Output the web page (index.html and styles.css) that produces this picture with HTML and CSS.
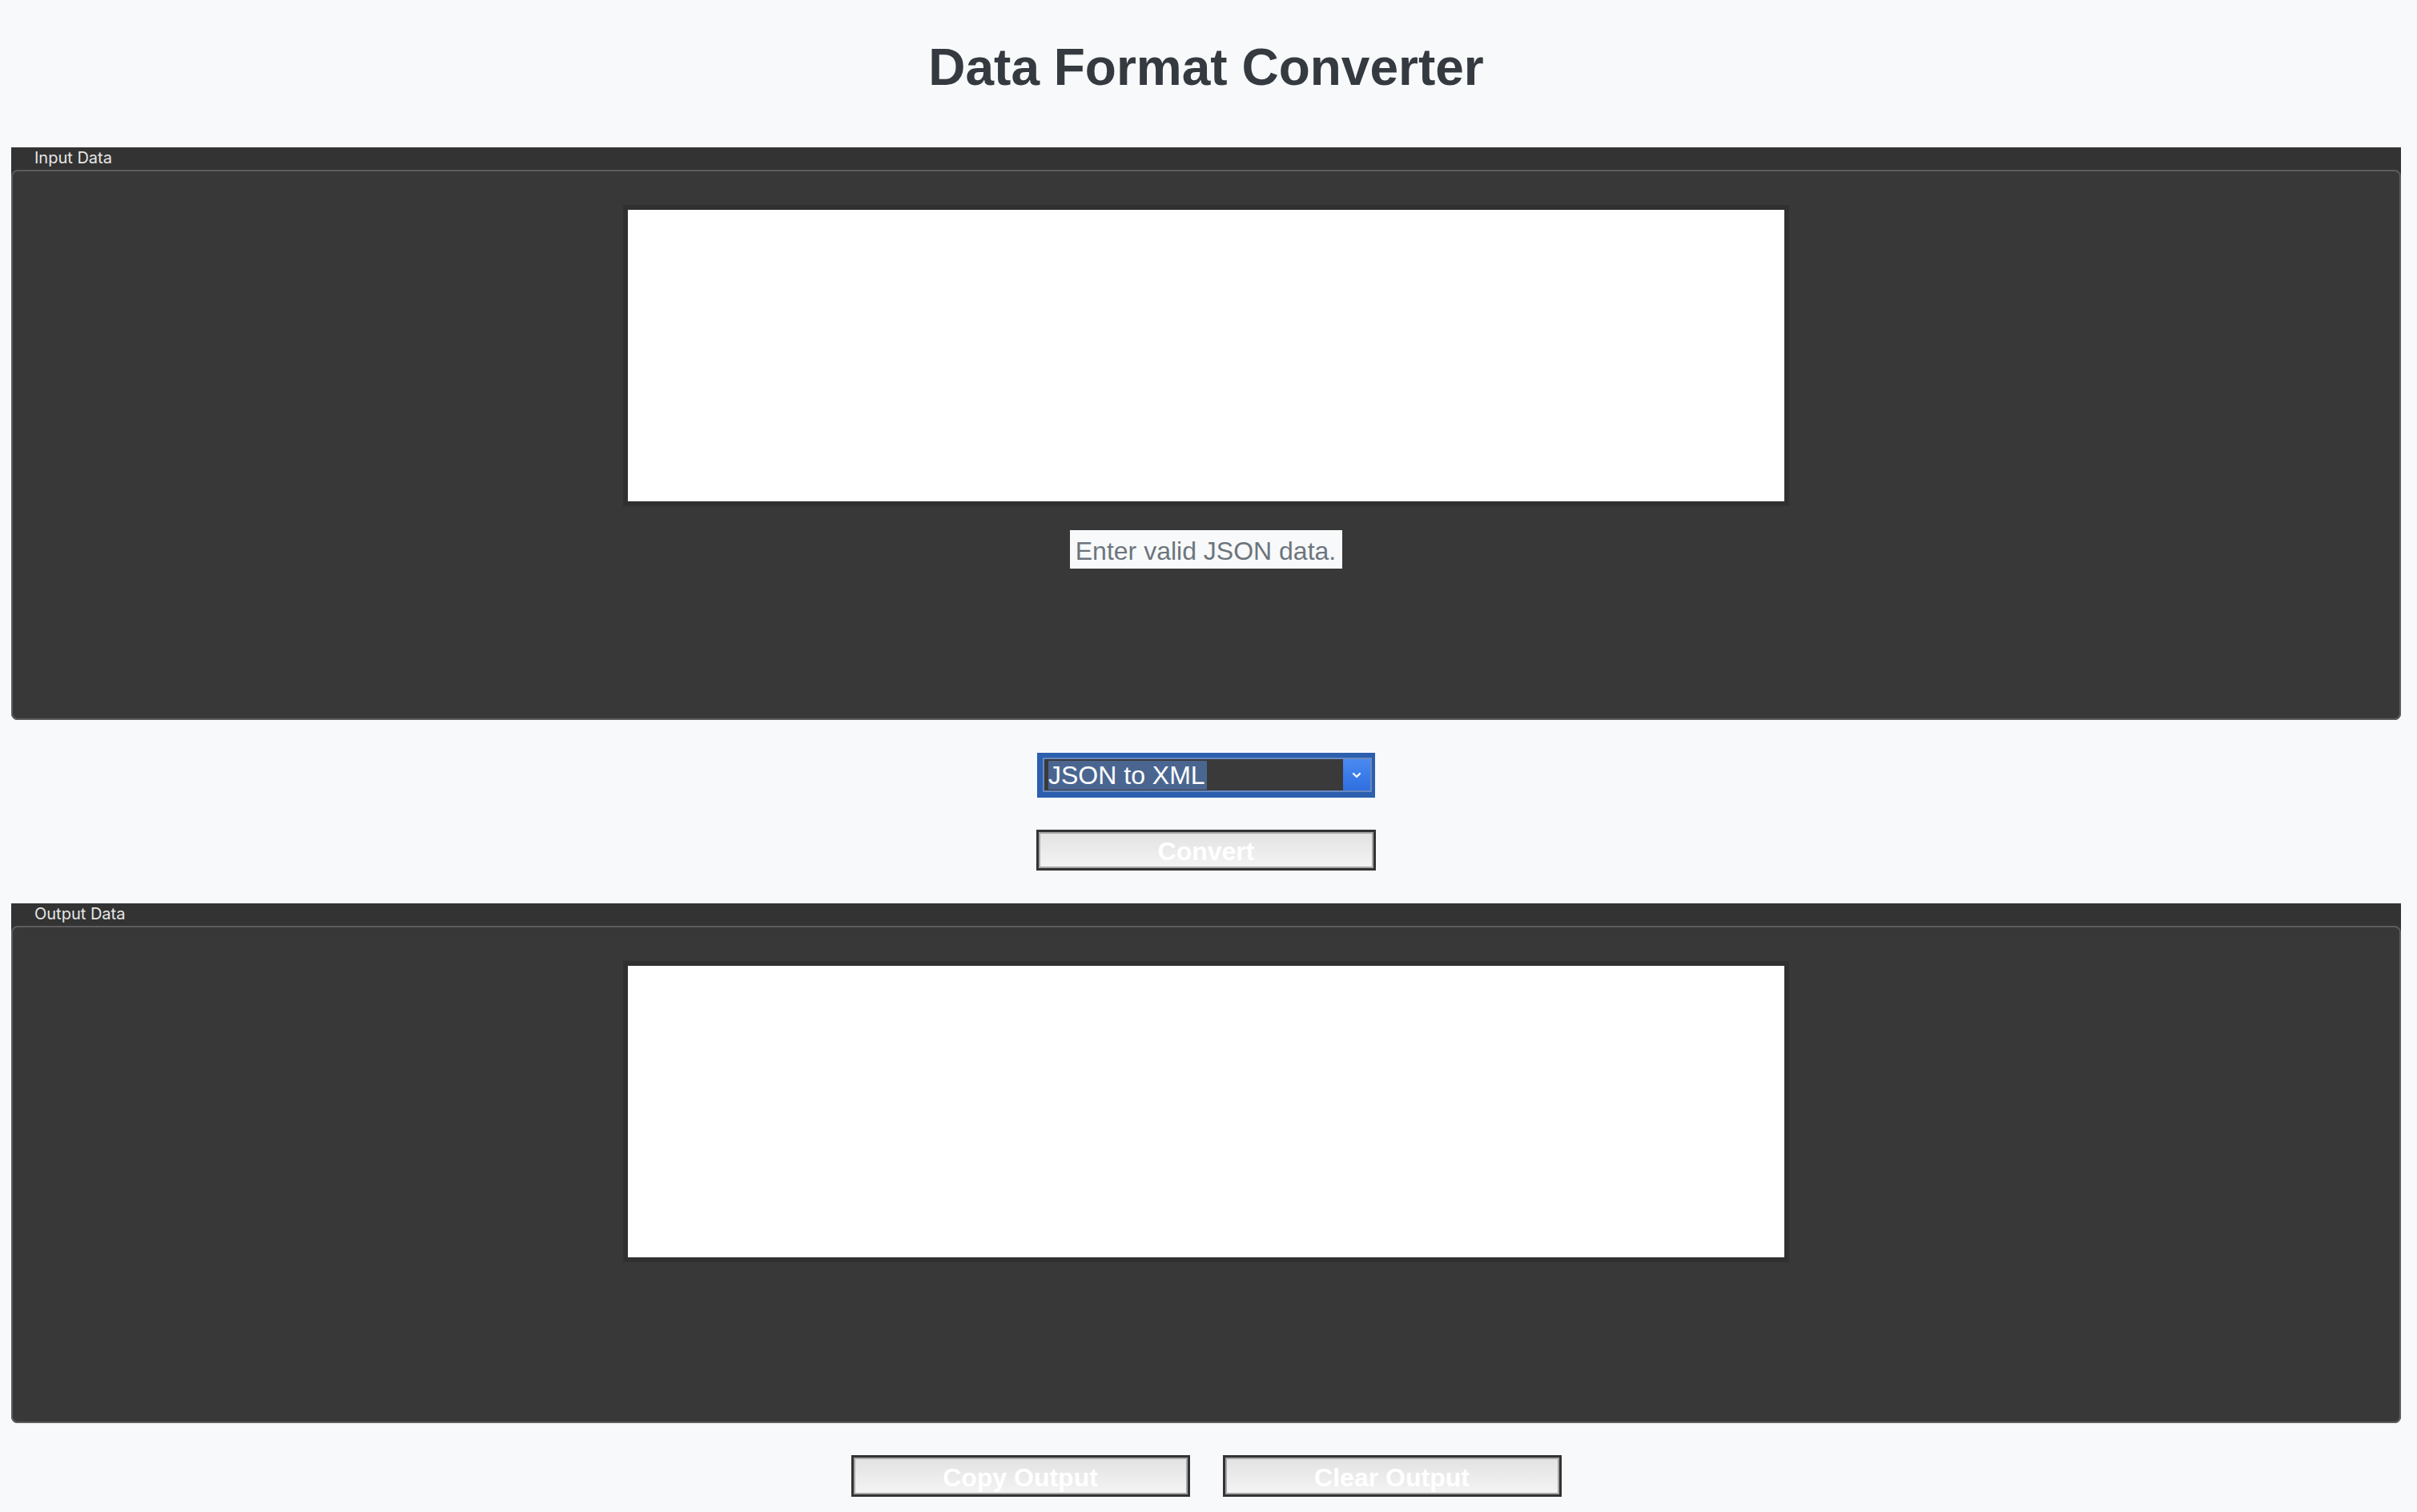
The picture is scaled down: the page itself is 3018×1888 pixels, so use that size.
FILE: index.html
```html
<!DOCTYPE html>
<html lang="en">
<head>
<meta charset="utf-8">
<title>Data Format Converter</title>
<link rel="stylesheet" href="styles.css">
</head>
<body>
<h1 class="title">Data Format Converter</h1>

<section class="panel">
  <div class="panel-label">Input Data</div>
  <div class="panel-box panel-box-input">
    <textarea class="data-area" aria-label="Input data"></textarea>
    <p class="hint">Enter valid JSON data.</p>
  </div>
</section>

<div class="controls">
  <div class="select" role="combobox" aria-label="Conversion type">
    <div class="select-inner">
      <div class="select-value"><span class="select-text">JSON to XML</span></div>
      <div class="select-arrow">
        <svg width="12" height="8" viewBox="0 0 12 8"><path d="M2 2 L6 6 L10 2" fill="none" stroke="#fff" stroke-width="2.2" stroke-linecap="round" stroke-linejoin="round"/></svg>
      </div>
    </div>
  </div>
  <button class="btn btn-convert">Convert</button>
</div>

<section class="panel">
  <div class="panel-label">Output Data</div>
  <div class="panel-box panel-box-output">
    <textarea class="data-area" aria-label="Output data" readonly></textarea>
  </div>
</section>

<div class="actions">
  <button class="btn btn-action">Copy Output</button>
  <button class="btn btn-action">Clear Output</button>
</div>
</body>
</html>
```

FILE: styles.css
```css
html, body {
  margin: 0;
  padding: 0;
}

body {
  background: #f8f9fa;
  font-family: "Liberation Sans", Arial, sans-serif;
  display: flex;
  flex-direction: column;
  padding-right: 6px;
}

.title {
  margin: 47px 0 63px;
  font-size: 64px;
  font-weight: bold;
  line-height: normal;
  color: #343a40;
  text-align: center;
}

.panel {
  margin: 0 14px;
  background: #333333;
  border-radius: 0 0 8px 8px;
}

.panel-label {
  height: 28px;
  padding-left: 29px;
  font-family: "Inter", "Noto Sans", sans-serif;
  font-size: 20px;
  line-height: 27px;
  color: #e6e6e6;
}

.panel-box {
  display: flex;
  flex-direction: column;
  align-items: center;
  background: #383838;
  border: 2px solid #5c5c5c;
  border-radius: 8px;
  padding-top: 42px;
}

.panel-box-input {
  padding-bottom: 187px;
}

.panel-box-output {
  padding-bottom: 199px;
}

.data-area {
  box-sizing: border-box;
  width: 1456px;
  height: 376px;
  margin: 0;
  border: 6px solid #303030;
  background: #ffffff;
  resize: none;
  outline: none;
  display: block;
}

.hint {
  margin: 30px 0 0;
  padding: 7px 8px 3px 7px;
  background: #f8f9fa;
  color: #6c757d;
  font-size: 32px;
  line-height: 38px;
}

.controls {
  display: flex;
  flex-direction: column;
  align-items: center;
  gap: 40px;
  margin: 41px 0;
}

.select {
  box-sizing: border-box;
  width: 422px;
  height: 56px;
  display: flex;
  background: #2c5fae;
  padding: 6px 4px 7px 7px;
}

.select-inner {
  flex: 1;
  display: flex;
  border: 2px solid #6888c0;
}

.select-value {
  flex: 1;
  display: flex;
  align-items: center;
  padding-left: 5px;
  background: #3a3a3a;
}

.select-text {
  background: #4a6690;
  color: #ffffff;
  font-size: 32px;
  line-height: 36px;
  padding-right: 2px;
}

.select-arrow {
  width: 34px;
  display: flex;
  align-items: center;
  justify-content: center;
  background: linear-gradient(#4a8af0, #2f6fe0);
}

.btn {
  box-sizing: border-box;
  margin: 0;
  border: 3px solid #333333;
  box-shadow: inset 0 0 0 2px #a6a6a6;
  background: linear-gradient(#e2e2e2, #f4f4f4);
  color: #ffffff;
  font-family: "Liberation Sans", Arial, sans-serif;
  font-size: 32px;
  font-weight: bold;
  line-height: 1;
  padding: 3px 0 0;
}

.btn-convert {
  width: 424px;
  height: 51px;
}

.actions {
  display: flex;
  justify-content: center;
  gap: 41px;
  margin: 40px 0 20px;
}

.btn-action {
  width: 423px;
  height: 52px;
}
```
